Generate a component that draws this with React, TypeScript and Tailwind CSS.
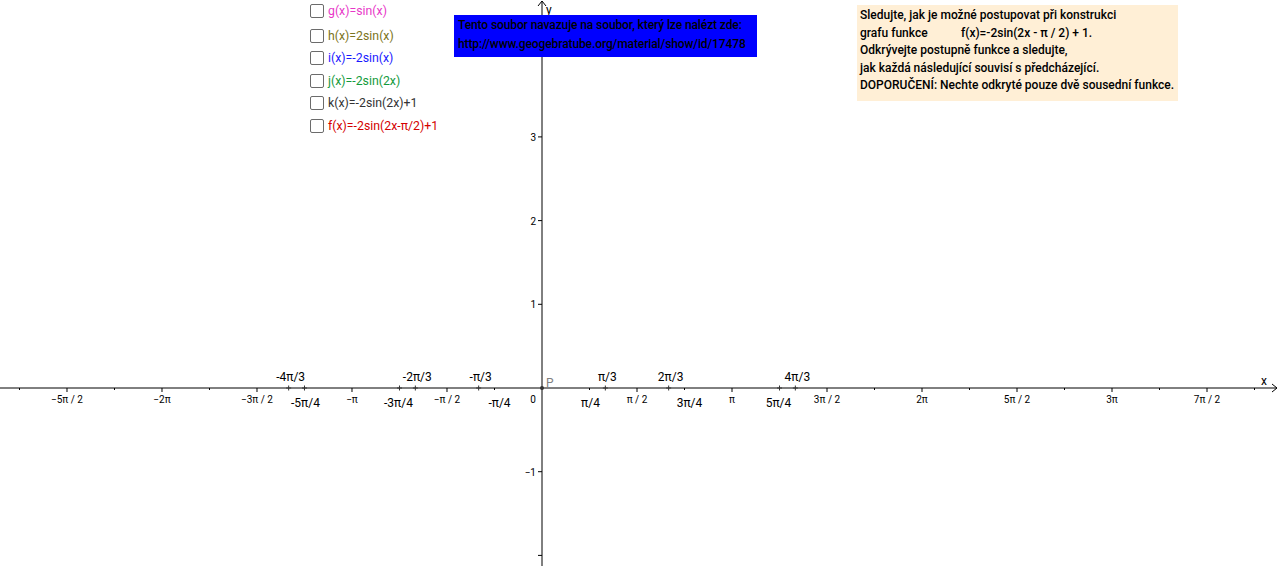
import React from "react";

// GeoGebra-style graphics view: trig axes with point markers and checkbox list.
const OX = 542;
const OY = 388;
const SX = 60.48; // px per unit on x
const SY = 83.7; // px per unit on y
const Q = (Math.PI / 4) * SX; // quarter-pi step

const FONT = "Roboto, 'Liberation Sans', sans-serif";

const xLabels: { k: number; t: string }[] = [
  { k: -10, t: "−5π / 2" },
  { k: -8, t: "−2π" },
  { k: -6, t: "−3π / 2" },
  { k: -4, t: "−π" },
  { k: -2, t: "−π / 2" },
  { k: 2, t: "π / 2" },
  { k: 4, t: "π" },
  { k: 6, t: "3π / 2" },
  { k: 8, t: "2π" },
  { k: 10, t: "5π / 2" },
  { k: 12, t: "3π" },
  { k: 14, t: "7π / 2" },
];

const above: { v: number; t: string }[] = [
  { v: -4 / 3, t: "-4π/3" },
  { v: -2 / 3, t: "-2π/3" },
  { v: -1 / 3, t: "-π/3" },
  { v: 1 / 3, t: "π/3" },
  { v: 2 / 3, t: "2π/3" },
  { v: 4 / 3, t: "4π/3" },
];

const below: { v: number; t: string; dx?: number; mark?: boolean }[] = [
  { v: -5 / 4, t: "-5π/4", mark: true },
  { v: -3 / 4, t: "-3π/4", dx: -2, mark: true },
  { v: -1 / 4, t: "-π/4", dx: 4 },
  { v: 1 / 4, t: "π/4" },
  { v: 3 / 4, t: "3π/4", dx: 4 },
  { v: 5 / 4, t: "5π/4", dx: -2, mark: true },
];

const checks = [
  { label: "g(x)=sin(x)", color: "text-[#e837c8]" },
  { label: "h(x)=2sin(x)", color: "text-[#7b7420]" },
  { label: "i(x)=-2sin(x)", color: "text-[#1a1aff]" },
  { label: "j(x)=-2sin(2x)", color: "text-[#139a3c]" },
  { label: "k(x)=-2sin(2x)+1", color: "text-[#333333]" },
  { label: "f(x)=-2sin(2x-π/2)+1", color: "text-[#d40000]" },
];

function Plus({ x }: { x: number }) {
  return (
    <g stroke="#333" strokeWidth={1}>
      <line x1={x - 2.5} y1={OY} x2={x + 2.5} y2={OY} />
      <line x1={x} y1={OY - 2.5} x2={x} y2={OY + 2.5} />
    </g>
  );
}

function Axes() {
  const ticks: number[] = [];
  for (let k = -11; k <= 15; k++) ticks.push(k);
  return (
    <svg width={1280} height={566} className="absolute inset-0" style={{ fontFamily: FONT }}>
      {/* x axis */}
      <line x1={0} y1={OY} x2={1277} y2={OY} stroke="#000" strokeWidth={1} />
      <polyline points="1272,384 1277,388 1272,392" fill="none" stroke="#000" strokeWidth={1} />
      <text x={1261} y={385} fontSize={12} fill="#000">x</text>
      {/* y axis */}
      <line x1={OX} y1={1} x2={OX} y2={566} stroke="#000" strokeWidth={1} />
      <polyline points="538,6 542,1 546,6" fill="none" stroke="#000" strokeWidth={1} />
      <text x={546} y={14} fontSize={12} fill="#000">y</text>

      {ticks.map((k) =>
        k === 0 ? null : (
          <line
            key={k}
            x1={OX + k * Q}
            y1={OY}
            x2={OX + k * Q}
            y2={OY + (k % 2 === 0 ? 4 : 2)}
            stroke="#000"
            strokeWidth={1}
          />
        )
      )}
      {xLabels.map((l) => (
        <text key={l.k} x={OX + l.k * Q} y={403} fontSize={10} textAnchor="middle" fill="#000">
          {l.t}
        </text>
      ))}
      <text x={533} y={403} fontSize={10} textAnchor="middle" fill="#000">0</text>

      {[-2, -1, 1, 2, 3, 4].map((v) => (
        <line key={v} x1={OX - 4} y1={OY - v * SY} x2={OX} y2={OY - v * SY} stroke="#000" strokeWidth={1} />
      ))}
      {[
        { v: 3, t: "3" },
        { v: 2, t: "2" },
        { v: 1, t: "1" },
        { v: -1, t: "−1" },
      ].map((l) => (
        <text key={l.v} x={536} y={OY - l.v * SY + 4} fontSize={10} textAnchor="end" fill="#000">
          {l.t}
        </text>
      ))}

      {above.map((p) => {
        const x = OX + p.v * Math.PI * SX;
        return (
          <g key={p.t}>
            <Plus x={x} />
            <text x={x + 2} y={381} fontSize={12} textAnchor="middle" fill="#000">
              {p.t}
            </text>
          </g>
        );
      })}
      {below.map((p) => {
        const x = OX + p.v * Math.PI * SX;
        return (
          <g key={p.t}>
            {p.mark && <Plus x={x} />}
            <text x={x + 1 + (p.dx ?? 0)} y={407} fontSize={12} textAnchor="middle" fill="#000">
              {p.t}
            </text>
          </g>
        );
      })}

      <circle cx={OX} cy={OY} r={2} fill="#333" />
      <text x={546} y={387} fontSize={12} fill="#808080">P</text>
    </svg>
  );
}

export default function App() {
  return (
    <div className="relative h-[566px] w-[1280px] overflow-hidden bg-white" style={{ fontFamily: FONT }}>
      <Axes />

      <ul className="absolute left-[310px] top-[0px] flex flex-col">
        {checks.map((c, i) => (
          <li key={c.label} className={`flex h-[22.5px] items-center gap-[4px] ${i === 0 ? "mb-[2px]" : ""}`}>
            <span className="h-[14px] w-[14px] rounded-[2px] border border-[#6b6b6b] bg-white" />
            <span className={`text-[12.3px] leading-none ${c.color}`}>{c.label}</span>
          </li>
        ))}
      </ul>

      <div className="absolute left-[454px] top-[15px] h-[42px] w-[303px] whitespace-nowrap bg-[#0000ff] px-[4px] pt-[1px] text-[12px] font-medium leading-[19px] tracking-[-0.1px] text-black">
        <p>Tento soubor navazuje na soubor, který lze nalézt zde:</p>
        <p>http://www.geogebratube.org/material/show/id/17478</p>
      </div>

      <div className="absolute left-[857px] top-[5px] h-[96px] w-[321px] bg-[#ffefd6] px-[3px] pt-[2px] text-[12px] font-medium leading-[17.5px] text-black">
        <p>Sledujte, jak je možné postupovat při konstrukci</p>
        <p>
          <span className="inline-block w-[101px]">grafu funkce</span>f(x)=-2sin(2x - π / 2) + 1.
        </p>
        <p>Odkrývejte postupně funkce a sledujte,</p>
        <p>jak každá následující souvisí s předcházející.</p>
        <p>DOPORUČENÍ: Nechte odkryté pouze dvě sousední funkce.</p>
      </div>
    </div>
  );
}
